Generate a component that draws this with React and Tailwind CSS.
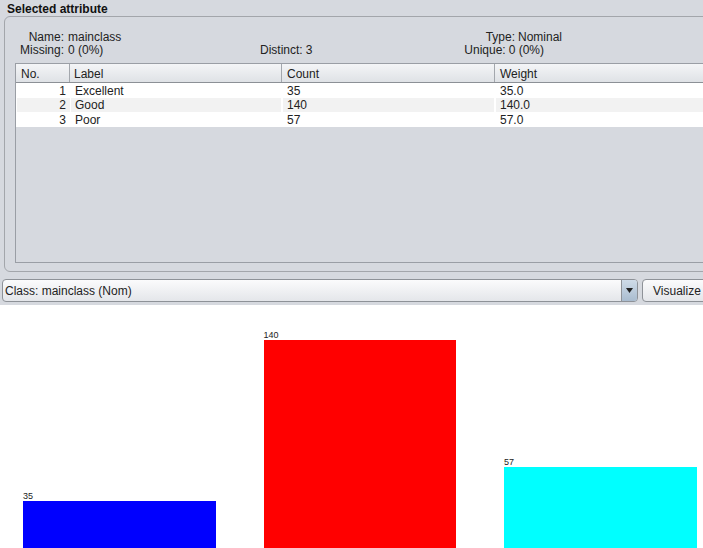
import React from "react";

const rows = [
  { no: 1, label: "Excellent", count: "35", weight: "35.0" },
  { no: 2, label: "Good", count: "140", weight: "140.0" },
  { no: 3, label: "Poor", count: "57", weight: "57.0" },
];

const bars = [
  { v: 35, color: "bg-[#0000ff]", h: 54 },
  { v: 140, color: "bg-[#ff0000]", h: 215 },
  { v: 57, color: "bg-[#00ffff]", h: 88 },
];

export default function App() {
  return (
    <div
      className="w-[703px] h-[548px] overflow-hidden bg-[#d6d9df] text-[12px] leading-[14px] text-[#222]"
      style={{ fontFamily: '"Liberation Sans", Arial, sans-serif' }}
    >
      {/* title */}
      <div className="h-[16px] pl-[7px] pt-[2px] font-bold text-[#111]">Selected attribute</div>

      {/* group box */}
      <div className="ml-[4px] w-[720px] h-[256px] border border-[#a3a6ab] rounded-l-[6px] pt-[13px]">
        <div className="flex h-[13px]">
          <div className="w-[59px] text-right">Name:</div>
          <div className="pl-[4px] w-[451px]">mainclass</div>
          <div className="ml-[-60px] w-[60px] text-right">Type:</div>
          <div className="pl-[3px]">Nominal</div>
        </div>
        <div className="flex h-[13px]">
          <div className="w-[59px] text-right">Missing:</div>
          <div className="pl-[4px] w-[196px]">0 (0%)</div>
          <div>Distinct:</div>
          <div className="pl-[3px] w-[203px]">3</div>
          <div className="ml-[-52px] w-[52px] text-right">Unique:</div>
          <div className="pl-[3px]">0 (0%)</div>
        </div>

        {/* table */}
        <div className="ml-[10px] mt-[7px] h-[200px] border border-[#9a9ea5] bg-[#d6d9df] flex flex-col">
          <div className="flex h-[19px] border-b border-[#8c9096] bg-gradient-to-b from-[#f4f5f7] to-[#dfe2e6]">
            <div className="w-[54px] pl-[5px] pt-[3px] border-r border-[#a3a7ad]">No.</div>
            <div className="w-[212px] pl-[4px] pt-[3px] border-r border-[#a3a7ad]">Label</div>
            <div className="w-[213px] pl-[5px] pt-[3px] border-r border-[#a3a7ad]">Count</div>
            <div className="flex-1 pl-[5px] pt-[3px]">Weight</div>
          </div>
          {rows.map((r, i) => (
            <div key={r.no} className="flex h-[14.5px] pt-[0.5px] bg-white">
              <div className={`w-[53px] mr-[1px] ml-[1px] pr-[4px] text-right ${i === 1 ? "bg-[#f2f2f2]" : "bg-white"}`}>{r.no}</div>
              <div className={`w-[210px] mr-[2px] pl-[4px] ${i === 1 ? "bg-[#f2f2f2]" : "bg-white"}`}>{r.label}</div>
              <div className={`w-[211px] mr-[2px] pl-[4px] ${i === 1 ? "bg-[#f2f2f2]" : "bg-white"}`}>{r.count}</div>
              <div className={`flex-1 pl-[4px] ${i === 1 ? "bg-[#f2f2f2]" : "bg-white"}`}>{r.weight}</div>
            </div>
          ))}
        </div>
      </div>

      {/* combo row */}
      <div className="flex mt-[7px] h-[23px] pl-[2px] gap-[4px]">
        <div className="flex shrink-0 w-[636px] border border-[#8e9298] rounded-[4px] overflow-hidden bg-gradient-to-b from-[#fbfbfc] to-[#e4e6ea]">
          <div className="flex-1 pl-[2px] pt-[4px]">Class: mainclass (Nom)</div>
          <div className="w-[16px] border-l border-[#8e9298] bg-gradient-to-b from-[#cfdbe8] to-[#a9bccf] flex items-center justify-center">
            <svg width="7" height="5" viewBox="0 0 7 5"><path d="M0 0h7L3.5 5z" fill="#222" /></svg>
          </div>
        </div>
        <div className="shrink-0 w-[100px] border border-[#8e9298] rounded-[4px] bg-gradient-to-b from-[#fbfbfc] to-[#e4e6ea] pl-[10px] pt-[4px] whitespace-nowrap">
          Visualize All
        </div>
      </div>

      {/* chart */}
      <div className="mt-[3px] bg-white h-[250px] flex items-end pl-[23px] gap-[48px]">
        {bars.map((b) => (
          <div key={b.v} className="flex flex-col w-[192.5px] shrink-0">
            <div className="text-[9px] leading-[9px] text-[#222]">{b.v}</div>
            <div className={`${b.color} w-full`} style={{ height: b.h }} />
          </div>
        ))}
      </div>
    </div>
  );
}
